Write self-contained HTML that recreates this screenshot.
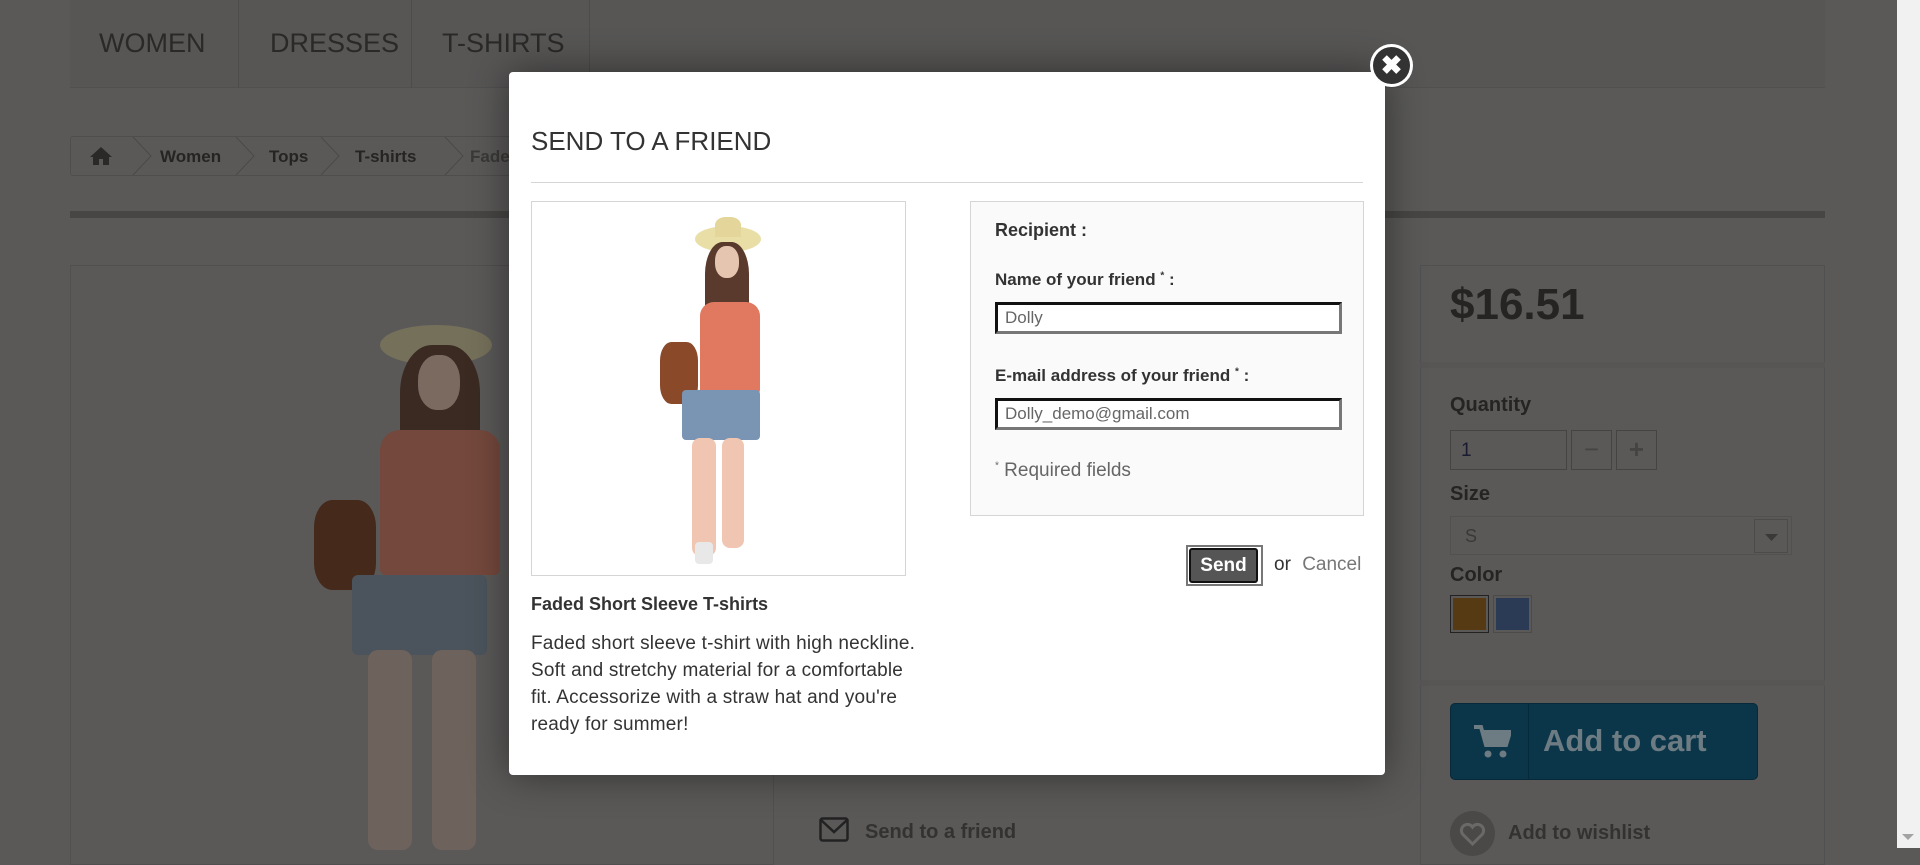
<!DOCTYPE html>
<html><head><meta charset="utf-8">
<style>
*{box-sizing:border-box;margin:0;padding:0}
body{width:1920px;height:848px;overflow:hidden;background:#5a5958;font-family:"Liberation Sans",sans-serif;position:relative}
.abs{position:absolute}
.nav{left:70px;top:0;width:1755px;height:88px;background:#575655;border-bottom:1px solid #515050}
.nav span{position:absolute;top:28px;font-size:27px;color:#2a2928}
.sep{position:absolute;top:0;width:1px;height:88px;background:#4d4c4b}
.bc{left:70px;top:136px;width:520px;height:40px;border:1px solid #4f4e4d;border-radius:3px}
.bc span{position:absolute;top:10px;font-size:17px;font-weight:bold;color:#252423}
.modal{left:509px;top:72px;width:876px;height:703px;background:#fff;border-radius:4px;box-shadow:0 0 40px rgba(0,0,0,.45)}
.m{position:absolute}
h1{position:absolute;left:22px;top:54px;font-size:26px;font-weight:normal;color:#333}
.lbl{position:absolute;left:24px;font-size:17px;font-weight:bold;color:#333}
.inp{position:absolute;left:24px;width:347px;height:32px;border:3px solid #111;border-bottom-color:#777;border-right-color:#777;font-size:17px;color:#666;padding:3px 7px;background:#fff}
.pl{position:absolute;left:1450px;font-size:20px;font-weight:bold;color:#252423}
</style></head><body>
<div class="abs nav">
<span style="left:29px">WOMEN</span><div class="sep" style="left:168px"></div>
<span style="left:200px">DRESSES</span><div class="sep" style="left:341px"></div>
<span style="left:372px">T-SHIRTS</span><div class="sep" style="left:519px"></div>
</div>
<div class="abs bc">
<svg style="position:absolute;left:18px;top:9px" width="24" height="20" viewBox="0 0 24 20"><path d="M12 1L1 11h3v8h6v-6h4v6h6v-8h3z" fill="#2a2928"/></svg>
<svg style="position:absolute;left:0;top:0" width="520" height="38"><g fill="none" stroke="#4a4948" stroke-width="1"><path d="M62 0l18 19-18 19"/><path d="M165 0l18 19-18 19"/><path d="M250 0l18 19-18 19"/><path d="M374 0l18 19-18 19"/></g></svg>
<span style="left:89px">Women</span><span style="left:198px">Tops</span><span style="left:284px">T-shirts</span><span style="left:399px;color:#3a3938">Fade</span>
</div>
<div class="abs" style="left:70px;top:211px;width:1755px;height:7px;background:#474645"></div>
<div class="abs" style="left:70px;top:265px;width:704px;height:600px;border:1px solid #515050"></div>
<div class="abs" style="left:380px;top:325px;width:112px;height:40px;border-radius:50%;background:#75705a"></div>
<div class="abs" style="left:400px;top:345px;width:80px;height:120px;border-radius:40% 40% 20% 20%;background:#3a2a22"></div>
<div class="abs" style="left:418px;top:355px;width:42px;height:55px;border-radius:45%;background:#7a6a60"></div>
<div class="abs" style="left:380px;top:430px;width:120px;height:145px;border-radius:20px 20px 6px 6px;background:#74483c"></div>
<div class="abs" style="left:314px;top:500px;width:62px;height:90px;border-radius:30%;background:#45291b"></div>
<div class="abs" style="left:352px;top:575px;width:135px;height:80px;border-radius:6px;background:#4b545c"></div>
<div class="abs" style="left:368px;top:650px;width:44px;height:200px;background:#6e625c;border-radius:10px"></div>
<div class="abs" style="left:432px;top:650px;width:44px;height:200px;background:#6e625c;border-radius:10px"></div>
<div class="abs" style="left:1420px;top:265px;width:405px;height:600px;border:1px solid #515050"></div>
<div class="abs" style="left:1420px;top:362px;width:405px;height:6px;background:#575655"></div>
<div class="abs" style="left:1450px;top:280px;font-size:44px;font-weight:bold;color:#252423">$16.51</div>
<div class="pl" style="top:394px">Quantity</div>
<div class="abs" style="left:1450px;top:430px;width:117px;height:40px;border:1px solid #454443;font-size:19px;color:#1a1a30;padding:9px 10px">1</div>
<div class="abs" style="left:1571px;top:430px;width:41px;height:40px;border:1px solid #454443;color:#454443;font-size:26px;text-align:center;line-height:36px">−</div>
<div class="abs" style="left:1616px;top:430px;width:41px;height:40px;border:1px solid #454443;color:#454443;font-size:26px;font-weight:bold;text-align:center;line-height:36px">+</div>
<div class="pl" style="top:483px">Size</div>
<div class="abs" style="left:1450px;top:516px;width:342px;height:39px;border:1px solid #525150;font-size:18px;color:#3a3938;padding:9px 14px">S</div>
<div class="abs" style="left:1754px;top:519px;width:34px;height:34px;border:1px solid #4c4b4a"><svg width="34" height="34"><path d="M10 14h13l-6.5 7z" fill="#3a3938"/></svg></div>
<div class="pl" style="top:564px">Color</div>
<div class="abs" style="left:1450px;top:595px;width:39px;height:38px;border:1px solid #222;background:#553a13;box-shadow:inset 0 0 0 2px #5a5958"></div>
<div class="abs" style="left:1493px;top:595px;width:39px;height:38px;border:1px solid #4c4b4a;background:#2c3b55;box-shadow:inset 0 0 0 2px #5a5958"></div>
<div class="abs" style="left:1420px;top:680px;width:405px;height:6px;background:#575655"></div>
<div class="abs" style="left:1450px;top:703px;width:308px;height:77px;background:#0b3649;border:1px solid #08293a;border-radius:5px">
<div style="position:absolute;left:77px;top:0;width:1px;height:75px;background:#072a3a"></div>
<svg style="position:absolute;left:22px;top:20px" width="38" height="36" viewBox="0 0 38 36"><path d="M1 3h7l5 18h20l4-13H11" fill="none" stroke="#6d7b82" stroke-width="4"/><rect x="12" y="10" width="23" height="10" fill="#6d7b82"/><circle cx="15" cy="30" r="3.5" fill="#6d7b82"/><circle cx="30" cy="30" r="3.5" fill="#6d7b82"/></svg>
<div style="position:absolute;left:92px;top:19px;font-size:31px;font-weight:bold;color:#6d7b82">Add to cart</div>
</div>
<div class="abs" style="left:1450px;top:811px;width:45px;height:45px;border-radius:50%;background:#4a4948"><svg width="45" height="40" viewBox="0 0 45 40"><path d="M22.5 33l-10-10a6 6 0 0 1 10-7 6 6 0 0 1 10 7z" fill="none" stroke="#6a6968" stroke-width="3"/></svg></div>
<div class="abs" style="left:1508px;top:822px;font-size:20px;font-weight:bold;color:#333231">Add to wishlist</div>
<svg class="abs" style="left:819px;top:817px" width="30" height="26"><rect x="1.5" y="1.5" width="27" height="22" rx="2" fill="none" stroke="#222" stroke-width="2.5"/><path d="M2 3l13 12 13-12" fill="none" stroke="#222" stroke-width="2.5"/></svg>
<div class="abs" style="left:865px;top:821px;font-size:20px;font-weight:bold;color:#333231">Send to a friend</div>
<div class="abs" style="left:1897px;top:0;width:23px;height:848px;background:#f1f1f1"></div>
<svg class="abs" style="left:1900px;top:832px" width="16" height="10"><path d="M2 2h12l-6 6z" fill="#a3a3a3"/></svg>

<div class="abs modal">
<h1>SEND TO A FRIEND</h1>
<div class="m" style="left:22px;top:110px;width:832px;height:1px;background:#d6d4d4"></div>
<div class="m" style="left:22px;top:129px;width:375px;height:375px;border:1px solid #d6d4d4;background:#fff">
 <div class="m" style="left:163px;top:24px;width:66px;height:26px;border-radius:50%;background:#e9dfa6"></div>
 <div class="m" style="left:183px;top:15px;width:26px;height:20px;border-radius:40% 40% 0 0;background:#e4d69a"></div>
 <div class="m" style="left:173px;top:40px;width:44px;height:80px;border-radius:40% 40% 20% 20%;background:#5a3a2c"></div>
 <div class="m" style="left:183px;top:44px;width:24px;height:32px;border-radius:45%;background:#e5c4b0"></div>
 <div class="m" style="left:168px;top:100px;width:60px;height:92px;border-radius:14px 14px 4px 4px;background:#e0795f"></div>
 <div class="m" style="left:128px;top:140px;width:38px;height:62px;border-radius:30%;background:#8a4a2a"></div>
 <div class="m" style="left:150px;top:188px;width:78px;height:50px;border-radius:4px;background:#7a94b3"></div>
 <div class="m" style="left:160px;top:236px;width:24px;height:118px;border-radius:8px;background:#f0c6b2"></div>
 <div class="m" style="left:190px;top:236px;width:22px;height:110px;border-radius:8px;background:#f0c6b2"></div>
 <div class="m" style="left:163px;top:340px;width:18px;height:22px;border-radius:4px;background:#e8e8e8"></div>
</div>
<div class="m" style="left:22px;top:522px;font-size:18px;font-weight:bold;color:#333">Faded Short Sleeve T-shirts</div>
<div class="m" style="left:22px;top:558px;white-space:nowrap;font-size:19px;letter-spacing:0.2px;line-height:27px;color:#333">Faded short sleeve t-shirt with high neckline.<br>Soft and stretchy material for a comfortable<br>fit. Accessorize with a straw hat and you're<br>ready for summer!</div>
<div class="m" style="left:461px;top:129px;width:394px;height:315px;border:1px solid #d6d4d4;background:#fafafa">
 <div class="lbl" style="top:18px;font-size:18px">Recipient :</div>
 <div class="lbl" style="top:68px">Name of your friend <sup style="font-size:10px">*</sup> :</div>
 <div class="inp" style="top:100px">Dolly</div>
 <div class="lbl" style="top:164px">E-mail address of your friend <sup style="font-size:10px">*</sup> :</div>
 <div class="inp" style="top:196px">Dolly_demo@gmail.com</div>
 <div class="m" style="left:24px;top:258px;font-size:19px;color:#666"><sup style="font-size:10px">*</sup> Required fields</div>
</div>
<div class="m" style="left:677px;top:473px;width:77px;height:41px;border:2px solid #777;padding:1px;background:#fff">
 <div style="width:69px;height:35px;border:2px solid #111;border-radius:3px;background:#555;color:#fff;font-weight:bold;font-size:19px;text-align:center;line-height:31px">Send</div>
</div>
<div class="m" style="left:765px;top:482px;font-size:19px;color:#333">or <span style="color:#777;margin-left:6px">Cancel</span></div>
</div>
<div class="abs" style="left:1370px;top:44px;width:43px;height:43px;border-radius:50%;background:#fff"></div>
<div class="abs" style="left:1373px;top:47px;width:37px;height:37px;border-radius:50%;background:#333;color:#fff;font-size:26px;font-weight:bold;text-align:center;line-height:37px">✖</div>
</body></html>
